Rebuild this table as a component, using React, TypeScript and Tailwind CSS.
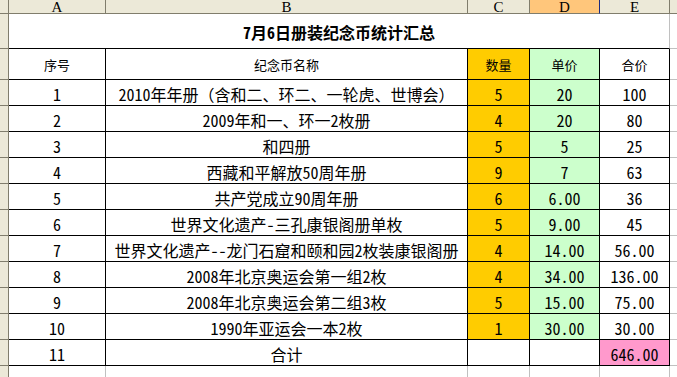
import * as React from 'react'

type RowData = [string, string, string, string, string]

const rows: RowData[] = [
  ['1', '2010年年册（含和二、环二、一轮虎、世博会）', '5', '20', '100'],
  ['2', '2009年和一、环一2枚册', '4', '20', '80'],
  ['3', '和四册', '5', '5', '25'],
  ['4', '西藏和平解放50周年册', '9', '7', '63'],
  ['5', '共产党成立90周年册', '6', '6.00', '36'],
  ['6', '世界文化遗产-三孔康银阁册单枚', '5', '9.00', '45'],
  ['7', '世界文化遗产--龙门石窟和颐和园2枚装康银阁册', '4', '14.00', '56.00'],
  ['8', '2008年北京奥运会第一组2枚', '4', '34.00', '136.00'],
  ['9', '2008年北京奥运会第二组3枚', '5', '15.00', '75.00'],
  ['10', '1990年亚运会一本2枚', '1', '30.00', '30.00'],
]

// 행 머리 칸 (왼쪽 회색 막대)
function RowHead() {
  return <div className="w-[9px] shrink-0 bg-[#ece9d8] border-r border-b border-[#807d6c]" />
}

function Cell({ w, bg = 'bg-white', children }: { w: string; bg?: string; children?: React.ReactNode }) {
  return (
    <div className={`${w} ${bg} shrink-0 flex items-center justify-center border-r border-b border-black pt-[2px] whitespace-nowrap overflow-hidden`}>
      {children}
    </div>
  )
}

function Tail() {
  return <div className="flex-1 border-b border-[#c0c0c0]" />
}

export default function App() {
  return (
    <div className="w-[677px] h-[377px] overflow-hidden bg-white text-black font-['Noto_Sans_Mono_CJK_SC','Noto_Sans_CJK_SC',monospace]">
      {/* column headers */}
      <div className="flex h-[14px] font-['Liberation_Serif',serif] text-[15px] leading-none">
        <div className="w-[9px] shrink-0 bg-[#ece9d8] border-r border-b border-[#807d6c]" />
        <div className="w-[97px] shrink-0 bg-[#ece9d8] border-r border-b border-[#807d6c] flex items-center justify-center pt-[1px]">A</div>
        <div className="w-[362px] shrink-0 bg-[#ece9d8] border-r border-b border-[#807d6c] flex items-center justify-center pt-[1px]">B</div>
        <div className="w-[62px] shrink-0 bg-[#ece9d8] border-r border-b border-[#807d6c] flex items-center justify-center pt-[1px]">C</div>
        <div className="w-[70px] shrink-0 bg-[#ffc67b] border-r border-b border-r-[#1c2a80] border-b-[#807d6c] flex items-center justify-center pt-[1px]">D</div>
        <div className="w-[70px] shrink-0 bg-[#ece9d8] border-r border-b border-[#807d6c] flex items-center justify-center pt-[1px]">E</div>
        <div className="flex-1 bg-[#ece9d8] border-b border-[#807d6c]" />
      </div>

      {/* title */}
      <div className="flex h-[35px]">
        <RowHead />
        <div className="w-[661px] shrink-0 flex items-center justify-center border-r border-r-[#c0c0c0] border-b border-b-black text-[16px] font-bold pt-[1px]">
          7月6日册装纪念币统计汇总
        </div>
        <Tail />
      </div>

      {/* header row */}
      <div className="flex h-[31px] text-[13px]">
        <RowHead />
        <Cell w="w-[97px]">序号</Cell>
        <Cell w="w-[362px]">纪念币名称</Cell>
        <Cell w="w-[62px]" bg="bg-[#ffcc00]">数量</Cell>
        <Cell w="w-[70px]" bg="bg-[#ccffcc]">单价</Cell>
        <Cell w="w-[70px]">合价</Cell>
        <Tail />
      </div>

      {rows.map((r) => (
        <div key={r[0]} className="flex h-[26px] text-[16px]">
          <RowHead />
          <Cell w="w-[97px]">{r[0]}</Cell>
          <Cell w="w-[362px]">{r[1]}</Cell>
          <Cell w="w-[62px]" bg="bg-[#ffcc00]">{r[2]}</Cell>
          <Cell w="w-[70px]" bg="bg-[#ccffcc]">{r[3]}</Cell>
          <Cell w="w-[70px]">{r[4]}</Cell>
          <Tail />
        </div>
      ))}

      {/* total */}
      <div className="flex h-[26px] text-[16px]">
        <RowHead />
        <Cell w="w-[97px]">11</Cell>
        <Cell w="w-[362px]">合计</Cell>
        <Cell w="w-[62px]" />
        <Cell w="w-[70px]" />
        <Cell w="w-[70px]" bg="bg-[#ff99cc]">646.00</Cell>
        <Tail />
      </div>

      {/* empty row */}
      <div className="flex h-[20px]">
        <RowHead />
        <div className="w-[97px] shrink-0 border-r border-[#c0c0c0]" />
        <div className="w-[362px] shrink-0 border-r border-[#c0c0c0]" />
        <div className="w-[62px] shrink-0 border-r border-[#c0c0c0]" />
        <div className="w-[70px] shrink-0 border-r border-[#c0c0c0]" />
        <div className="w-[70px] shrink-0 border-r border-[#c0c0c0]" />
        <div className="flex-1" />
      </div>
    </div>
  )
}
